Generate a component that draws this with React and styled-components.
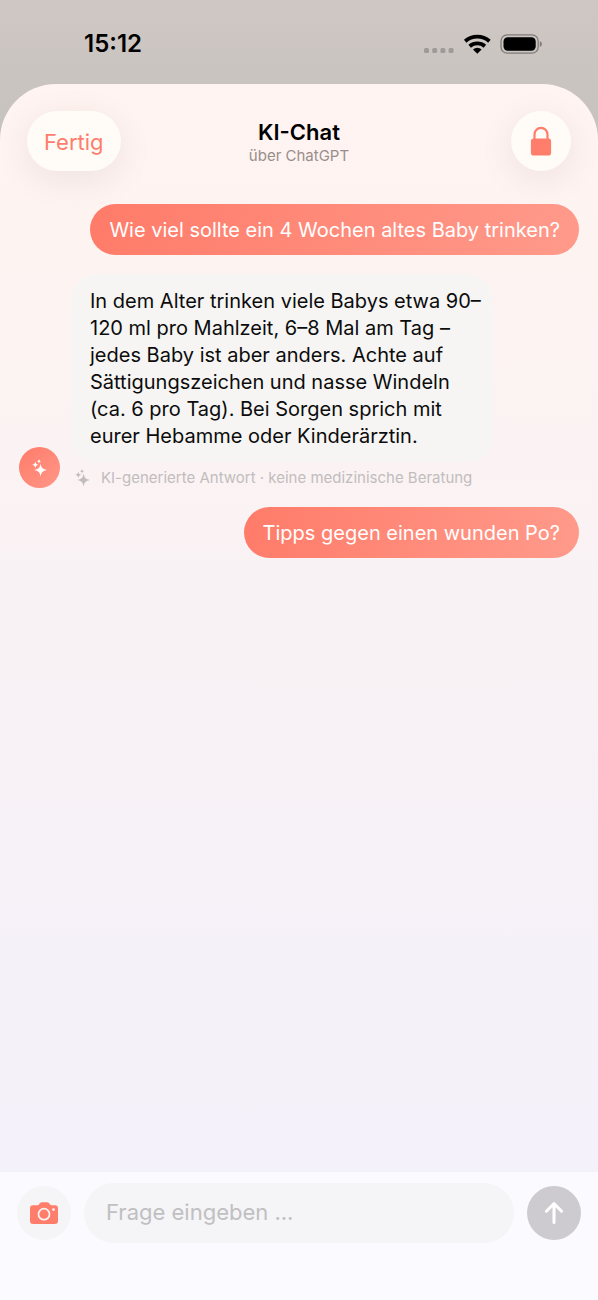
import React from 'react';
import styled, { createGlobalStyle } from 'styled-components';

const GlobalStyle = createGlobalStyle`
  * {
    box-sizing: border-box;
  }

  body {
    margin: 0;
    font-family: Inter, "Liberation Sans", sans-serif;
    color: #0c0c0c;
  }
`;

const Screen = styled.div`
  display: flex;
  flex-direction: column;
  min-height: 100vh;
  background: linear-gradient(#cfc7c4, #c9c4c0 84px, #c6c2be 150px);
`;

const StatusBar = styled.div`
  display: flex;
  justify-content: space-between;
  align-items: center;
  height: 84px;
  padding: 4px 56px 0 84px;
`;

const Clock = styled.time`
  font-size: 24px;
  font-weight: 600;
  line-height: 28px;
  color: #000;
`;

const StatusIcons = styled.div`
  display: flex;
  align-items: center;
`;

const Sheet = styled.div`
  display: flex;
  flex-direction: column;
  flex: 1;
  border-radius: 56px 56px 0 0;
  background: linear-gradient(#fff4f1, #fdf3f1 14%, #f4f1f9 80%, #f3f1fa);
`;

const Header = styled.header`
  display: grid;
  grid-template-columns: 1fr auto 1fr;
  align-items: center;
  padding: 27px 27px 33px;
`;

const PillButton = styled.button`
  display: flex;
  justify-content: center;
  align-items: center;
  justify-self: ${(props) => props.$side};
  width: ${(props) => (props.$round ? '60px' : 'auto')};
  height: 60px;
  padding: ${(props) => (props.$round ? '0' : '1px 17px 0')};
  border: none;
  border-radius: 30px;
  background-color: #fffcf8;
  box-shadow: 0 8px 36px rgba(70, 30, 20, 0.08);
  font-family: inherit;
  font-size: 22px;
  color: #ff7d6b;
  cursor: pointer;
`;

const TitleBlock = styled.div`
  padding-top: 2px;
  text-align: center;
`;

const Title = styled.h1`
  margin: 0;
  font-size: 22px;
  font-weight: 600;
  line-height: 27px;
  color: #000;
`;

const Subtitle = styled.p`
  margin: 0;
  font-size: 15px;
  line-height: 20px;
  color: #998e8b;
`;

const Messages = styled.main`
  display: flex;
  flex-direction: column;
  flex: 1;
  gap: 19px;
  padding: 0 19px;
`;

const UserBubble = styled.div`
  align-self: flex-end;
  padding: 13px 19px 11px;
  border-radius: 26px;
  background: linear-gradient(100deg, #ff7b69, #ff9a8b);
  font-size: 20px;
  line-height: 27px;
  color: #fff;
`;

const AnswerRow = styled.div`
  display: flex;
  align-items: flex-end;
  gap: 11px;
`;

const Avatar = styled.div`
  display: flex;
  justify-content: center;
  align-items: center;
  flex: none;
  width: 41px;
  height: 41px;
  border-radius: 50%;
  background: linear-gradient(135deg, #ff7b69, #ff9788);
`;

const AnswerBubble = styled.p`
  width: fit-content;
  max-width: 422px;
  margin: 0;
  padding: 14px 8px 12px 19px;
  border-radius: 26px;
  background-color: #f6f5f4;
  font-size: 20px;
  line-height: 27px;
`;

const Disclaimer = styled.div`
  display: flex;
  align-items: center;
  gap: 11px;
  padding: 6px 4px 0;
  font-size: 15px;
  line-height: 20px;
  color: #c1bdbd;
`;

const Composer = styled.form`
  display: flex;
  align-items: flex-start;
  gap: 13px;
  height: 128px;
  padding: 11px 17px;
  background-color: #fbfaff;
`;

const RoundButton = styled.button`
  display: flex;
  justify-content: center;
  align-items: center;
  flex: none;
  width: 54px;
  height: 54px;
  margin-top: 3px;
  padding: 0;
  border: none;
  border-radius: 50%;
  background-color: ${(props) => props.$color};
  cursor: pointer;
`;

const QuestionInput = styled.input`
  flex: 1;
  min-width: 0;
  height: 60px;
  padding: 0 22px 2px;
  border: none;
  border-radius: 30px;
  outline: none;
  background-color: #f5f4f6;
  font-family: inherit;
  font-size: 22px;
  color: #0c0c0c;

  &::placeholder {
    color: #c0bfc2;
    opacity: 1;
  }
`;

const SignalIcon = () => (
  <svg width="32" height="20" viewBox="0 0 32 20" fill="#9f9a97" aria-hidden="true">
    <rect x="1" y="14" width="5" height="5" rx="1.6" />
    <rect x="9.2" y="14" width="5" height="5" rx="1.6" />
    <rect x="17.4" y="14" width="5" height="5" rx="1.6" />
    <rect x="25.6" y="14" width="5" height="5" rx="1.6" />
  </svg>
);

const WifiIcon = () => (
  <svg width="44" height="20" viewBox="0 0 44 20" aria-hidden="true">
    <g fill="none" stroke="#000" strokeWidth="3.8">
      <path d="M10.2 7.2a18.4 18.4 0 0 1 24.2 0" />
      <path d="M14.7 12.3a11.6 11.6 0 0 1 15.2 0" />
    </g>
    <path d="M22.3 19.8l-4.3-4.4a6.2 6.2 0 0 1 8.6 0z" fill="#000" />
  </svg>
);

const BatteryIcon = () => (
  <svg width="43" height="20" viewBox="0 0 43 20" aria-hidden="true">
    <rect x="2" y="0.8" width="37.2" height="18.4" rx="6.2" fill="none" stroke="#7f7b78" strokeWidth="1.3" />
    <rect x="4.5" y="3.2" width="32.2" height="13.6" rx="4.2" fill="#000" />
    <path d="M40.8 7.2c2.8.6 2.8 5 0 5.6z" fill="#7f7b78" />
  </svg>
);

const LockIcon = () => (
  <svg width="22" height="30" viewBox="0 0 22 30" aria-hidden="true">
    <path d="M4.5 14V8.8a6.5 7 0 0 1 13 0V14" fill="none" stroke="#ff7d6b" strokeWidth="2.2" />
    <rect x="0.9" y="12.6" width="20.2" height="17" rx="2.8" fill="#ff7d6b" />
  </svg>
);

const SparklesIcon = ({ color }) => (
  <svg width="15" height="18" viewBox="0 0 15 18" fill={color} aria-hidden="true">
    <path d="M8.6 4.6c.8 4.2 1.9 5.500 6.200 6.500-4.300 1-5.400 2.300-6.200 6.500-.8-4.200-1.900-5.500-6.200-6.500 4.300-1 5.400-2.300 6.200-6.500z" />
    <path d="M3.300 2.400c.5 2.300 1 2.900 3.300 3.400-2.300.5-2.800 1.100-3.300 3.400C2.800 6.900 2.300 6.300 0 5.800c2.300-.5 2.800-1.100 3.300-3.400z" />
    <path d="M7 0c.4 1.500.7 1.900 2.200 2.200C7.700 2.500 7.400 2.900 7 4.400c-.4-1.500-.7-1.900-2.200-2.200C6.300 1.900 6.600 1.500 7 0z" />
  </svg>
);

const CameraIcon = () => (
  <svg width="28" height="22" viewBox="0 0 28 22" aria-hidden="true">
    <path
      d="M3 3.2h4.5c.7 0 1-.3 1.6-1C9.900 1 10.600.2 12 .2h5c1.400 0 2.100.8 2.900 2 .6.7.9 1 1.600 1H25a3 3 0 0 1 3 3V19a3 3 0 0 1-3 3H3a3 3 0 0 1-3-3V6.200a3 3 0 0 1 3-3z"
      fill="#ff7d6b"
    />
    <circle cx="14" cy="12.2" r="5.5" fill="none" stroke="#f9f5f6" strokeWidth="1.7" />
    <circle cx="23.5" cy="7.6" r="1.4" fill="#f9f5f6" />
  </svg>
);

const ArrowUpIcon = () => (
  <svg width="20" height="24" viewBox="0 0 20 24" aria-hidden="true">
    <path
      d="M10 21.500V2.800M2.400 10.200L10 2.600l7.600 7.600"
      fill="none"
      stroke="#fff"
      strokeWidth="3"
      strokeLinecap="round"
      strokeLinejoin="round"
    />
  </svg>
);

const App = () => {
  return (
    <Screen>
      <GlobalStyle />
      <StatusBar>
        <Clock>15:12</Clock>
        <StatusIcons>
          <SignalIcon />
          <WifiIcon />
          <BatteryIcon />
        </StatusIcons>
      </StatusBar>
      <Sheet>
        <Header>
          <PillButton type="button" $side="start">Fertig</PillButton>
          <TitleBlock>
            <Title>KI-Chat</Title>
            <Subtitle>über ChatGPT</Subtitle>
          </TitleBlock>
          <PillButton type="button" $side="end" $round aria-label="Datenschutz">
            <LockIcon />
          </PillButton>
        </Header>
        <Messages>
          <UserBubble>Wie viel sollte ein 4 Wochen altes Baby trinken?</UserBubble>
          <AnswerRow>
            <Avatar>
              <SparklesIcon color="#fff" />
            </Avatar>
            <div>
              <AnswerBubble>
                In dem Alter trinken viele Babys etwa 90–<wbr />120 ml pro Mahlzeit, 6–8 Mal am Tag –
                jedes Baby ist aber anders. Achte auf Sättigungszeichen und nasse Windeln
                (ca. 6 pro Tag). Bei Sorgen sprich mit eurer Hebamme oder Kinderärztin.
              </AnswerBubble>
              <Disclaimer>
                <SparklesIcon color="#c1bdbd" />
                <span>KI-generierte Antwort · keine medizinische Beratung</span>
              </Disclaimer>
            </div>
          </AnswerRow>
          <UserBubble>Tipps gegen einen wunden Po?</UserBubble>
        </Messages>
        <Composer onSubmit={(event) => event.preventDefault()}>
          <RoundButton type="button" $color="#f5f4f6" aria-label="Foto aufnehmen">
            <CameraIcon />
          </RoundButton>
          <QuestionInput type="text" placeholder="Frage eingeben ..." aria-label="Frage eingeben" />
          <RoundButton type="submit" $color="#cdcbd0" aria-label="Senden">
            <ArrowUpIcon />
          </RoundButton>
        </Composer>
      </Sheet>
    </Screen>
  );
};

export default App;
